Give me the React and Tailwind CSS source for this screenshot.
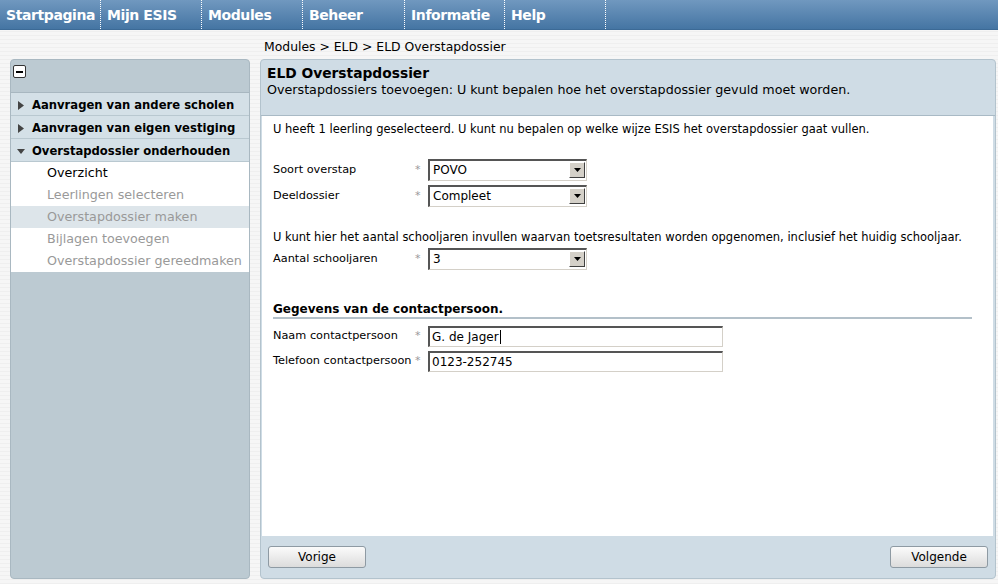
import React from "react";

const navItems = [
  ["Startpagina", "w-[101px]"],
  ["Mijn ESIS", "w-[101px]"],
  ["Modules", "w-[101px]"],
  ["Beheer", "w-[102px]"],
  ["Informatie", "w-[100px]"],
  ["Help", "w-[101px]"],
];

function Select({ value }) {
  return (
    <div className="w-[159px] h-[22px] flex items-stretch bg-white border-t-2 border-l-2 border-t-[#555] border-l-[#555] border-r border-b border-r-[#d4d0c8] border-b-[#d4d0c8]">
      <div className="flex-1 pl-[3px] text-[12px] leading-[19px] text-black">{value}</div>
      <div className="w-[16px] h-[16px] mt-[1px] mr-[1px] bg-[#d4d0c8] border-t border-l border-t-white border-l-white border-r border-b border-r-[#404040] border-b-[#404040] flex items-center justify-center">
        <svg width="7" height="4" viewBox="0 0 7 4"><path d="M0 0h7L3.5 4z" fill="#000" /></svg>
      </div>
    </div>
  );
}

function TextInput({ value, caret }) {
  return (
    <div className="w-[295px] h-[21px] bg-white border-t-2 border-l-2 border-t-[#555] border-l-[#555] border-r border-b border-r-[#d4d0c8] border-b-[#d4d0c8] pl-[2px] text-[12px] leading-[18px] text-black flex items-center">
      <span>{value}</span>
      {caret && <span className="inline-block w-[1px] h-[14px] bg-black ml-[1px]" />}
    </div>
  );
}

function Row({ label, children, mt = "mt-0" }) {
  return (
    <div className={`flex items-center ${mt}`}>
      <div className="w-[142px] text-[11.3px] text-black whitespace-nowrap">{label}</div>
      <div className="w-[13px] text-[11px] text-[#999]">*</div>
      {children}
    </div>
  );
}

export default function App() {
  return (
    <div className="w-[998px] h-[584px] flex flex-col bg-[#f4f4f4] bg-[repeating-linear-gradient(180deg,#f6f6f6_0px,#f6f6f6_3px,#efefef_3px,#efefef_4px)] font-['DejaVu_Sans','Verdana',sans-serif] overflow-hidden">
      {/* Nav bar */}
      <div className="h-[30px] flex bg-gradient-to-b from-[#7098bf] to-[#4575a3] border-b border-b-[#3c6a96]">
        {navItems.map(([t, w]) => (
          <div key={t} className={`${w} h-full border-r border-dotted border-r-white flex items-center pl-[6px] pt-[1px] text-white font-bold text-[14px] tracking-[-0.4px]`}>
            {t}
          </div>
        ))}
      </div>
      {/* Breadcrumb */}
      <div className="h-[29px] pl-[264px] pt-[8px] text-[12.4px] text-black">Modules &gt; ELD &gt; ELD Overstapdossier</div>

      {/* Main */}
      <div className="flex-1 flex gap-[10px] pl-[10px] pr-[2px] pb-[5px]">
        {/* Sidebar */}
        <div className="w-[240px] bg-[#bccad2] border border-[#a9b8c1] rounded-[4px] flex flex-col overflow-hidden">
          <div className="h-[33px] border-b border-b-[#a8b7c0] pl-[2px] pt-[5px]">
            <div className="w-[13px] h-[13px] bg-white border border-[#333] rounded-[2px] flex items-center justify-center">
              <div className="w-[7px] h-[2px] bg-black" />
            </div>
          </div>
          {[
            ["Aanvragen van andere scholen", false],
            ["Aanvragen van eigen vestiging", false],
            ["Overstapdossier onderhouden", true],
          ].map(([t, open]) => (
            <div key={t} className="h-[23px] pt-[3px] bg-[#d4e0e7] border-b border-b-[#b9c8d0] flex items-center pl-[6px] gap-[6px] text-[11.6px] font-bold text-black">
              {open ? (
                <svg width="9" height="9" viewBox="0 0 9 9"><path d="M0 2h8L4 7z" fill="#444" /></svg>
              ) : (
                <svg width="9" height="9" viewBox="0 0 9 9"><path d="M1 0v9l6-4.5z" fill="#444" /></svg>
              )}
              <span>{t}</span>
            </div>
          ))}
          <div className="bg-white flex flex-col text-[12.7px]">
            {[
              ["Overzicht", "text-black", ""],
              ["Leerlingen selecteren", "text-[#999]", ""],
              ["Overstapdossier maken", "text-[#999]", "bg-[#dde5ea]"],
              ["Bijlagen toevoegen", "text-[#999]", ""],
              ["Overstapdossier gereedmaken", "text-[#999]", ""],
            ].map(([t, c, bg]) => (
              <div key={t} className={`h-[22px] flex items-center pl-[36px] whitespace-nowrap ${c} ${bg}`}>{t}</div>
            ))}
          </div>
          <div className="flex-1" />
        </div>

        {/* Right panel */}
        <div className="flex-1 bg-[#cfdce5] border border-[#b3c3cd] rounded-[4px] flex flex-col overflow-hidden">
          <div className="h-[56px] border-b border-b-[#a9bac5] pl-[6px] pt-[5px] text-black">
            <div className="text-[13.8px] font-bold leading-[17px]">ELD Overstapdossier</div>
            <div className="text-[12.7px] leading-[16px]">Overstapdossiers toevoegen: U kunt bepalen hoe het overstapdossier gevuld moet worden.</div>
          </div>
          <div className="flex-1 bg-white ml-[1px] mr-[2px] pl-[11px] pr-[21px] pt-[5px] text-[12px] text-black">
            <div className="leading-[16px] text-[11.5px]">U heeft 1 leerling geselecteerd. U kunt nu bepalen op welke wijze ESIS het overstapdossier gaat vullen.</div>
            <Row label="Soort overstap" mt="mt-[22px]"><Select value="POVO" /></Row>
            <Row label="Deeldossier" mt="mt-[4px]"><Select value="Compleet" /></Row>
            <div className="mt-[22px] leading-[16px] text-[11.5px]">U kunt hier het aantal schooljaren invullen waarvan toetsresultaten worden opgenomen, inclusief het huidig schooljaar.</div>
            <Row label="Aantal schooljaren" mt="mt-[3px]"><Select value="3" /></Row>
            <div className="mt-[31px] font-bold leading-[16px] pb-0 border-b-2 border-b-[#b3c0c9]">Gegevens van de contactpersoon.</div>
            <Row label="Naam contactpersoon" mt="mt-[7px]"><TextInput value="G. de Jager" caret /></Row>
            <Row label="Telefoon contactpersoon" mt="mt-[4px]"><TextInput value="0123-252745" /></Row>
          </div>
          <div className="h-[42px] flex items-center justify-between px-[7px]">
            <button className="w-[98px] h-[22px] rounded-[3px] border border-[#8e9aa3] bg-gradient-to-b from-[#fbfbfb] to-[#dcdcdc] text-[12px] text-black">Vorige</button>
            <button className="w-[98px] h-[22px] rounded-[3px] border border-[#8e9aa3] bg-gradient-to-b from-[#fbfbfb] to-[#dcdcdc] text-[12px] text-black">Volgende</button>
          </div>
        </div>
      </div>
    </div>
  );
}
